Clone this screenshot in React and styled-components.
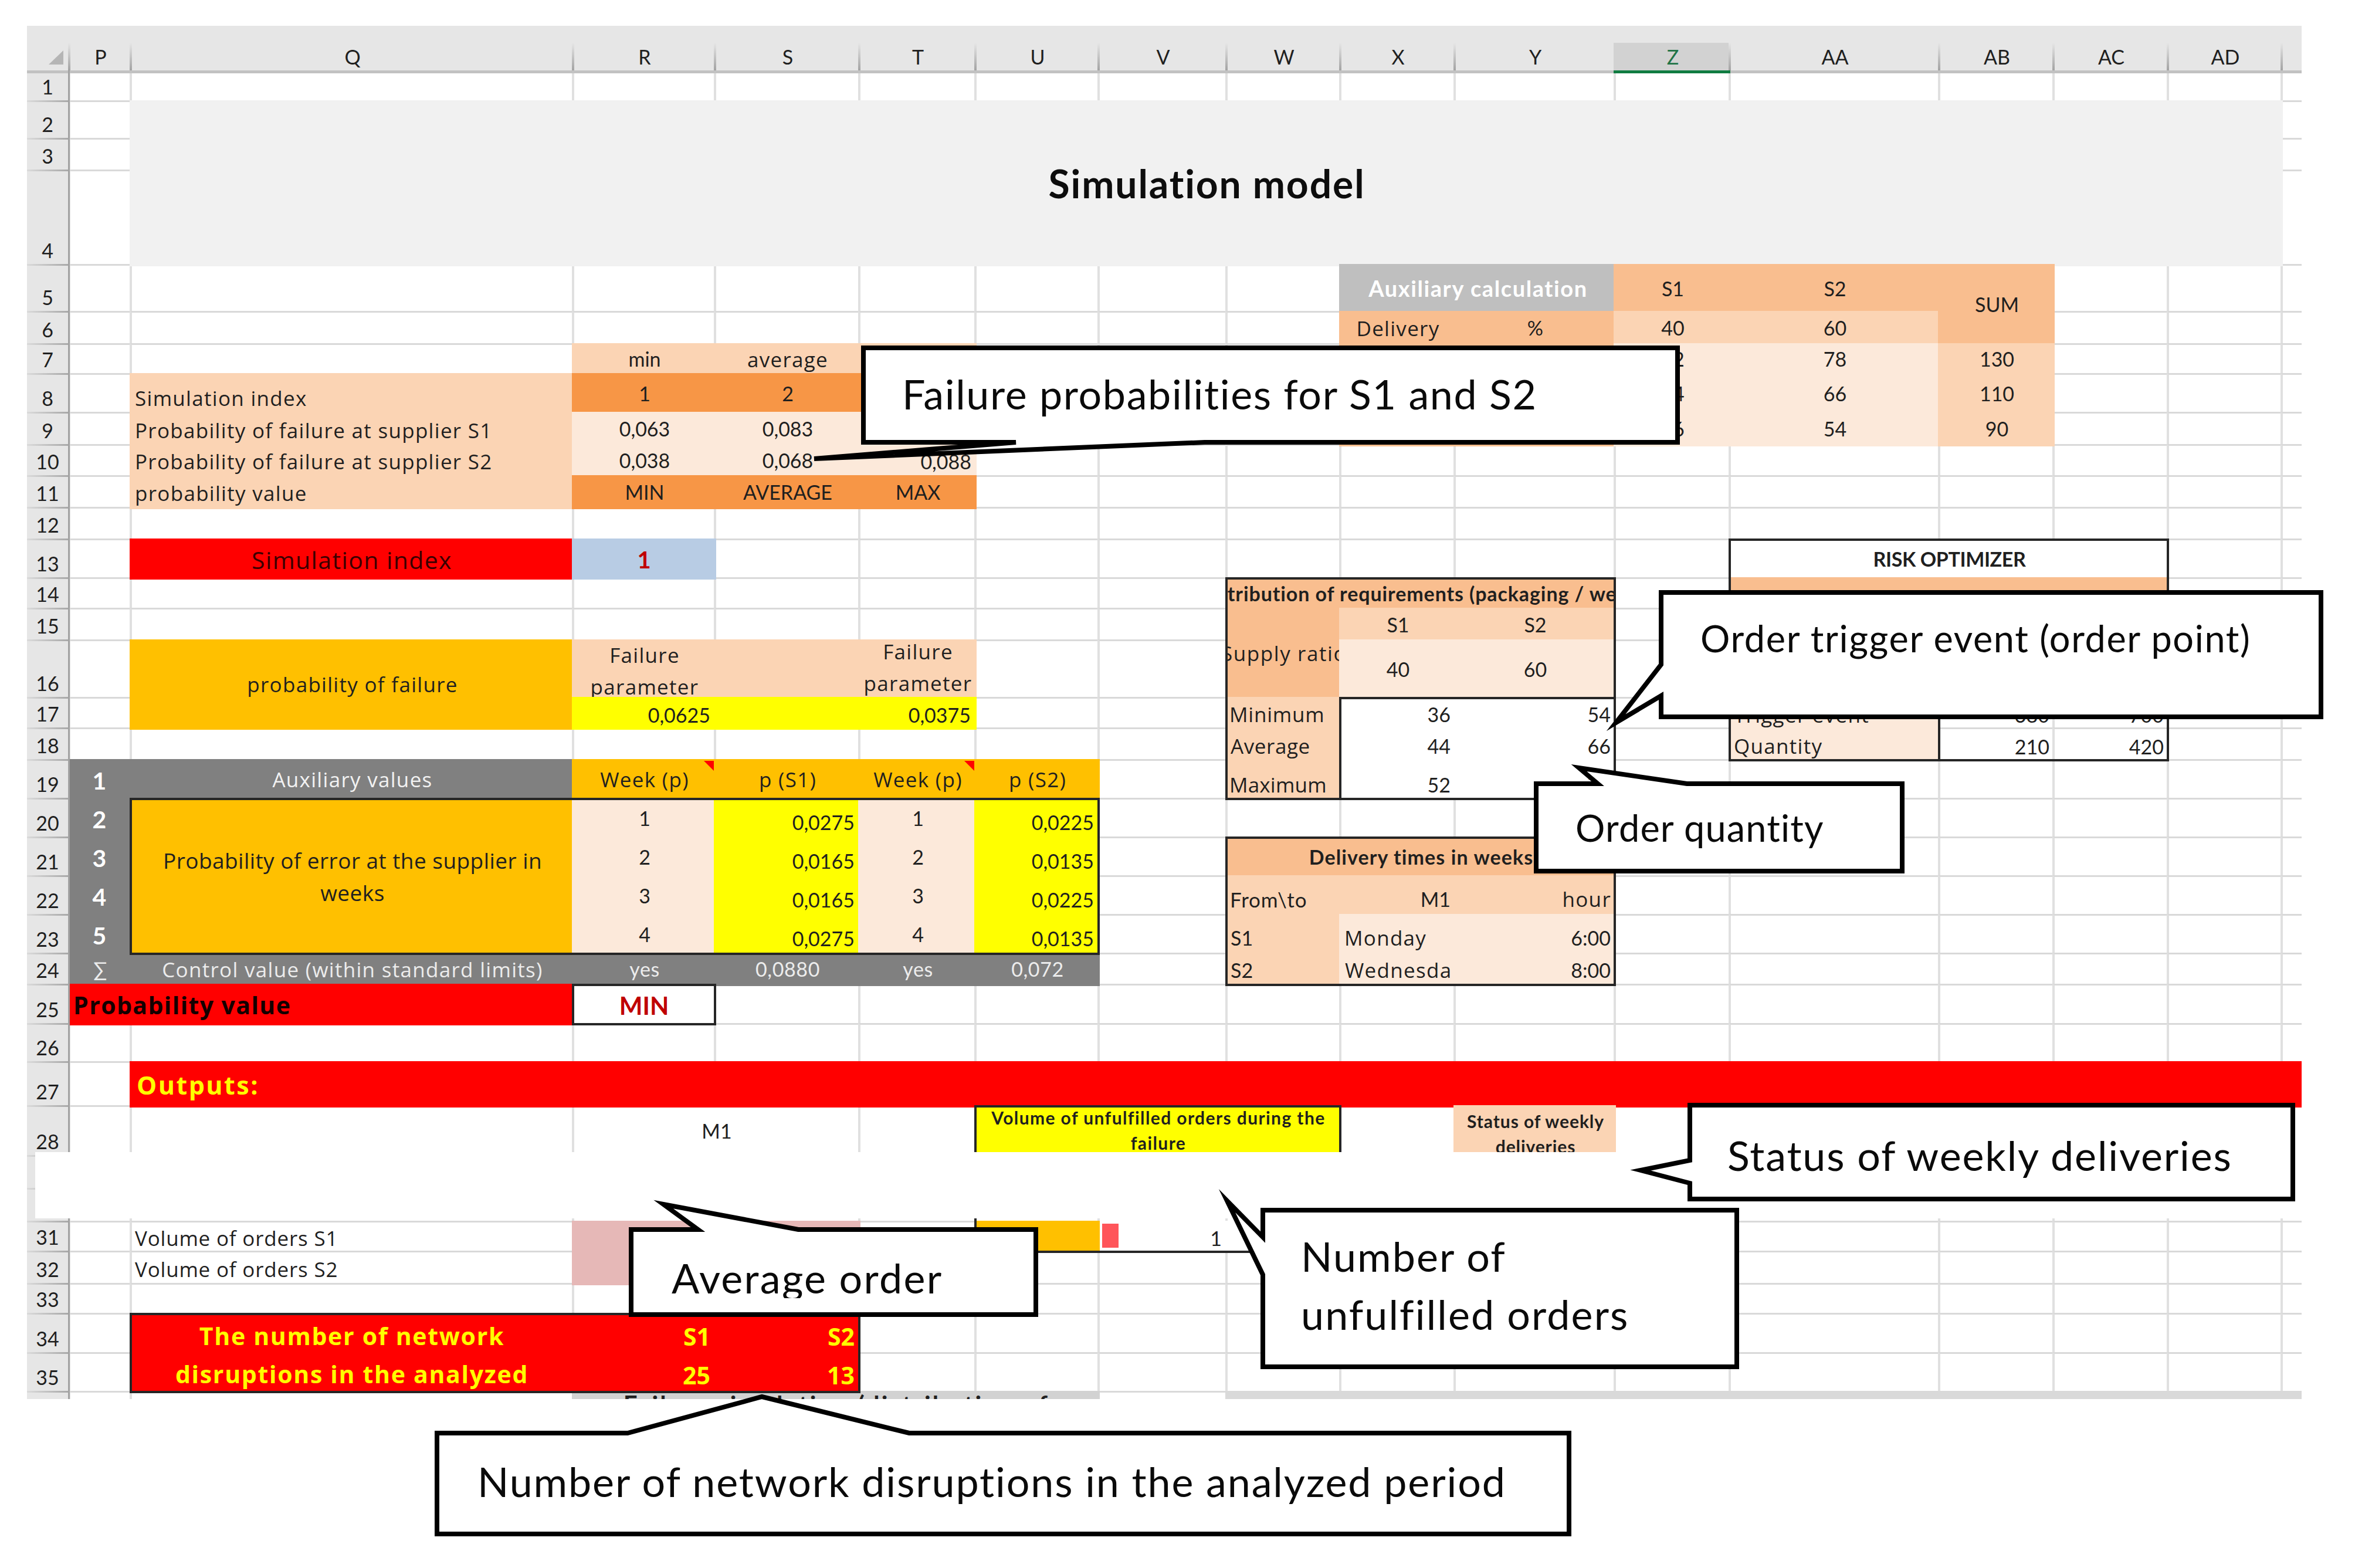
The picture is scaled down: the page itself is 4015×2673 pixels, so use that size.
import React from "react";
import styled, { createGlobalStyle, css } from "styled-components";

const GlobalStyle = createGlobalStyle`
  html, body { margin: 0; padding: 0; background: #fff; }
  * { box-sizing: border-box; }
`;

const color = {
  header: "#e6e6e6",
  line: "#d9d9d9",
  peach: "#fbd4b4",
  peachDark: "#f9be8f",
  peachLight: "#fce9da",
  orange: "#f79646",
  amber: "#ffc000",
  yellow: "#ffff00",
  red: "#ff0000",
  grey: "#808080",
  ink: "#1f1f1f",
  darkRed: "#c00000",
};

const font = {
  figures: `Lato, "Open Sans", sans-serif`,
  words: `"Open Sans", Lato, sans-serif`,
};

/* Widths of the columns and heights of the rows. */
const columns = [
  ["P", 105], ["Q", 754], ["R", 242], ["S", 246], ["T", 198], ["U", 210],
  ["V", 218], ["W", 194], ["X", 195], ["Y", 273], ["Z", 196], ["AA", 357],
  ["AB", 195], ["AC", 195], ["AD", 194], ["", 36],
];
const rows = [
  51, 64, 54, 161, 80, 55, 51, 66, 55, 53, 54, 54, 66, 52, 54, 98, 52, 54, 66,
  66, 66, 66, 66, 53, 67, 65, 75, 85, 56, 56, 51, 55, 51, 67, 66, 14,
];

const area = (range) => {
  const [from, to = from] = range.split(":");
  const parse = (ref) => {
    const [, c, r] = ref.match(/^([A-Z]+)(\d+)$/);
    const i = columns.findIndex(([name]) => name === c);
    return [Number(r) + 1, (i < 0 ? columns.length - 1 : i) + 2];
  };
  const [r1, c1] = parse(from);
  const [r2, c2] = parse(to);
  return `${r1} / ${c1} / ${r2 + 1} / ${c2 + 1}`;
};

const Page = styled.main`
  position: relative;
  width: 4015px;
  height: 2673px;
  padding: 44px 0 0 46px;
  overflow: hidden;
  background: #fff;
  color: ${color.ink};
  font-family: ${font.figures};
  font-variant-ligatures: none;
`;

const Sheet = styled.section`
  display: grid;
  width: 3878px;
  height: 2341px;
  overflow: hidden;
  grid-template-columns: 70px ${columns.map(([, w]) => `${w}px`).join(" ")};
  grid-template-rows: 76px ${rows.map((h) => `${h}px`).join(" ")};
  font-size: 34px;
  line-height: 1.2;
`;

const Corner = styled.div`
  grid-area: 1 / 1;
  display: flex;
  align-items: flex-end;
  justify-content: flex-end;
  padding: 0 8px 10px 0;
  background: ${color.header};

  &::after {
    content: "";
    border-style: solid;
    border-width: 0 0 24px 25px;
    border-color: transparent transparent #b5b5b5 transparent;
  }
`;

const ColumnHead = styled.div`
  grid-row: 1;
  display: flex;
  align-items: flex-end;
  justify-content: center;
  padding: 0 0 2px 6px;
  background: linear-gradient(${color.header} 38%, #a3a3a3) left / 4px 100% no-repeat ${color.header};
  ${(p) => p.$active && css`
    color: #217346;
    background: linear-gradient(${color.header} 29px, #d2d2d2 29px);
  `}
`;

const HeadRule = styled.div`
  grid-row: 2;
  grid-column: ${(p) => p.$col};
  align-self: start;
  height: 5px;
  margin-right: ${(p) => (p.$active ? "-3px" : 0)};
  z-index: ${(p) => (p.$active ? 2 : 1)};
  background: ${(p) => (p.$active ? "#107c41" : "#c2c2c2")};
`;

const RowHead = styled.div`
  grid-column: 1;
  display: flex;
  align-items: flex-end;
  justify-content: center;
  padding-bottom: 2px;
  background: linear-gradient(90deg, #dadada, #a8a8a8) top / 100% 3px no-repeat ${color.header};
`;

const RowRule = styled.div`
  grid-area: 2 / 2 / -1 / 3;
  justify-self: start;
  width: 3px;
  z-index: 1;
  background: #a3a3a3;
`;

const Blank = styled.div`
  border-left: 4px solid #e0e0e0;
  border-top: 3px solid ${color.line};
`;

const flexAlign = { start: "flex-start", center: "center", end: "flex-end" };

const Cell = styled.div`
  grid-area: ${(p) => area(p.$at)};
  display: flex;
  min-width: 0;
  min-height: 0;
  overflow: hidden;
  margin: ${(p) => (p.$plain ? "4px 0 0 4px" : "0 -4px -4px 0")};
  padding: ${(p) => p.$pad || "0 9px 6px 9px"};
  justify-content: ${(p) => flexAlign[p.$h || "start"]};
  align-items: ${(p) => flexAlign[p.$v || "end"]};
  text-align: ${(p) => p.$h || "left"};
  white-space: pre;
  background: ${(p) => p.$bg || "transparent"};
  color: ${(p) => p.$ink || "inherit"};
  font-family: ${(p) => p.$font || "inherit"};
  font-size: ${(p) => p.$size || 34}px;
  font-weight: ${(p) => (p.$bold ? 700 : 400)};
  line-height: ${(p) => p.$line || 1.2};
  letter-spacing: ${(p) => p.$track || 0}px;
`;

const Centred = styled(Cell).attrs((p) => ({
  $h: p.$h || "center",
  $v: p.$v || "center",
  $pad: p.$pad || "0 0 0 2px",
}))``;

const Outline = styled.div`
  grid-area: ${(p) => area(p.$at)};
  margin: 0 -4px -4px 0;
  border: 4px solid #262626;
  z-index: 1;
`;

const NoteMark = styled.i`
  grid-area: ${(p) => area(p.$at)};
  justify-self: end;
  margin-top: 3px;
  width: 17px;
  height: 17px;
  background: ${color.red};
  clip-path: polygon(0 0, 100% 0, 100% 100%);
`;

const DataBar = styled.div`
  grid-area: ${(p) => area(p.$at)};
  margin: 5px 0 5px 8px;
  width: 28px;
  background: #ff555a;
`;

const Redaction = styled.div`
  grid-area: 29 / 1 / 33 / -1;
  margin: 80px 0 55px 14px;
  background: #fff;
  z-index: 2;
`;

const CalloutBox = styled.aside`
  position: absolute;
  left: ${(p) => p.$x}px;
  top: ${(p) => p.$y}px;
  width: ${(p) => p.$w}px;
  height: ${(p) => p.$h}px;
  z-index: 3;
`;

const CalloutShape = styled.svg`
  position: absolute;
  inset: 0;
  width: 100%;
  height: 100%;
  overflow: visible;
  fill: #fff;
  stroke: #000;
  stroke-width: 8px;
  stroke-miterlimit: 10;
`;

const CalloutText = styled.p`
  position: relative;
  margin: 0;
  padding: ${(p) => p.$top}px 0 0 ${(p) => p.$left}px;
  height: ${(p) => (p.$clip ? `${p.$clip}px` : "auto")};
  overflow: ${(p) => (p.$clip ? "hidden" : "visible")};
  color: #0a0a0a;
  font-size: ${(p) => p.$size}px;
  line-height: ${(p) => p.$line || 1.2};
  letter-spacing: ${(p) => p.$track || 0}px;
  white-space: pre;
`;

function Callout({ x, y, w, h, outline, children, ...text }) {
  return (
    <CalloutBox $x={x} $y={y} $w={w} $h={h}>
      <CalloutShape>
        <polygon points={outline} />
      </CalloutShape>
      <CalloutText
        $top={text.top}
        $left={text.left}
        $size={text.size}
        $line={text.line}
        $track={text.track}
        $clip={text.clip}
      >
        {children}
      </CalloutText>
    </CalloutBox>
  );
}

/* Words are set a little larger and wider than figures. */
const words = { $font: font.words, $size: 35, $track: 1.3 };

const centredCells = (list, props) =>
  list.map(([at, value]) => (
    <Centred key={at} $at={at} {...props}>{value}</Centred>
  ));

const rightCells = (list, props) =>
  list.map(([at, value]) => (
    <Cell key={at} $at={at} $h="end" {...props}>{value}</Cell>
  ));

function Frame() {
  return (
    <>
      <Corner />
      {columns.map(([name], i) => (
        <ColumnHead key={i} $active={name === "Z"} style={{ gridColumn: i + 2 }}>{name}</ColumnHead>
      ))}
      {rows.map((_, i) => (
        <RowHead key={i} style={{ gridRow: i + 2 }}>{i < 35 ? i + 1 : ""}</RowHead>
      ))}
      {rows.map((_, r) =>
        columns.map((__, c) => (
          <Blank key={`${r}-${c}`} style={{ gridArea: `${r + 2} / ${c + 2}` }} />
        ))
      )}
      <HeadRule $col="1 / -1" />
      <HeadRule $col="12" $active />
      <RowRule />
    </>
  );
}

function FailureTable() {
  return (
    <>
      <Cell $at="R7:T7" $bg={color.peach} />
      <Cell $at="Q8:Q11" $bg={color.peach} />
      <Cell $at="R8:T8" $bg={color.orange} />
      <Cell $at="R9:T10" $bg={color.peachLight} />
      <Cell $at="R11:T11" $bg={color.orange} />
      <Cell $at="Q8" {...words}>Simulation index</Cell>
      <Cell $at="Q9" {...words}>Probability of failure at supplier S1</Cell>
      <Cell $at="Q10" {...words}>Probability of failure at supplier S2</Cell>
      <Cell $at="Q11" {...words}>probability value</Cell>
      {centredCells([
        ["R7", "min"], ["R8", "1"], ["S8", "2"],
        ["R9", "0,063"], ["S9", "0,083"], ["R10", "0,038"], ["S10", "0,068"],
        ["R11", "MIN"], ["S11", "AVERAGE"], ["T11", "MAX"],
      ])}
      <Centred $at="S7" {...words}>average</Centred>
      {rightCells([["T10", "0,088"]])}
      <Centred $at="Q13" $bg={color.red} {...words} $size={41} $track={1.4} $pad="4px 0 0" $ink="#3a0000">
        Simulation index
      </Centred>
      <Centred $at="R13" $bg="#b8cce4" $size={40} $bold $pad="2px 0 0" $ink={color.darkRed}>1</Centred>
    </>
  );
}

function WeeklyProbability() {
  const yellow = { $bg: color.yellow };
  return (
    <>
      <Centred $at="Q16:Q17" $bg={color.amber} {...words}>probability of failure</Centred>
      <Cell $at="R16:T16" $bg={color.peach} />
      <Centred $at="R16" $v="start" $line="54px" {...words}>{"Failure\nparameter"}</Centred>
      <Centred $at="T16" $v="end" $line="54px" {...words}>{"Failure\nparameter"}</Centred>
      <Cell $at="R17:T17" $bg={color.yellow} />
      {rightCells([["R17", "0,0625"], ["T17", "0,0375"]], { $pad: "0 10px 4px 0" })}

      <Cell $at="P19:Q19" $bg={color.grey} />
      <Cell $at="P20:P24" $bg={color.grey} />
      {centredCells(
        [["P19", "1"], ["P20", "2"], ["P21", "3"], ["P22", "4"], ["P23", "5"]],
        { $size: 41, $bold: true, $ink: "#fff", $pad: "4px 2px 0 0" }
      )}
      <Centred $at="Q19" {...words} $ink="#f2f2f2">Auxiliary values</Centred>
      <Cell $at="R19:U19" $bg={color.amber} />
      {centredCells(
        [["R19", "Week (p)"], ["S19", "p (S1)"], ["T19", "Week (p)"], ["U19", "p (S2)"]],
        words
      )}
      <NoteMark $at="R19" />
      <NoteMark $at="T19" />
      <Centred $at="Q20:Q23" $bg={color.amber} {...words} $size={37} $track={0.45} $line="55px">
        {"Probability of error at the supplier in\nweeks"}
      </Centred>
      <Cell $at="R20:R23" $bg={color.peachLight} />
      <Cell $at="S20:S23" {...yellow} />
      <Cell $at="T20:T23" $bg={color.peachLight} />
      <Cell $at="U20:U23" {...yellow} />
      {centredCells([
        ["R20", "1"], ["R21", "2"], ["R22", "3"], ["R23", "4"],
        ["T20", "1"], ["T21", "2"], ["T22", "3"], ["T23", "4"],
      ])}
      {rightCells(
        [
          ["S20", "0,0275"], ["S21", "0,0165"], ["S22", "0,0165"], ["S23", "0,0275"],
          ["U20", "0,0225"], ["U21", "0,0135"], ["U22", "0,0225"], ["U23", "0,0135"],
        ],
        { $pad: "0 10px 7px 0" }
      )}
      <Cell $at="Q24:U24" $bg={color.grey} />
      {centredCells(
        [["P24", "∑"], ["R24", "yes"], ["S24", "0,0880"], ["T24", "yes"], ["U24", "0,072"]],
        { $ink: "#ececec", $track: 0.6 }
      )}
      <Centred $at="Q24" {...words} $ink="#ececec">Control value (within standard limits)</Centred>
      <Outline $at="Q20:U23" />
      <Cell
        $at="P25:Q25" $bg={color.red} $bold {...words} $size={41} $track={1.4}
        $v="center" $pad="3px 0 0 9px" $ink="#140000"
      >
        Probability value
      </Cell>
      <Centred $at="R25" $bg="#fff" $bold $size={42} $pad="4px 0 0" $ink={color.darkRed}>MIN</Centred>
      <Outline $at="R25" />
    </>
  );
}

function AuxiliaryCalculation() {
  return (
    <>
      <Centred $at="X5:Y5" $bg="#bfbfbf" $bold $size={38} $track={1.6} $ink="#fff">Auxiliary calculation</Centred>
      <Cell $at="Z5:AA5" $bg={color.peachDark} />
      <Cell $at="X6:Y9" $bg={color.peachDark} />
      <Cell $at="Z6:AA6" $bg={color.peach} />
      <Cell $at="Z7:AA9" $bg={color.peachLight} />
      <Centred $at="AB5:AB6" $bg={color.peachDark}>SUM</Centred>
      <Cell $at="AB7:AB9" $bg={color.peach} />
      <Centred $at="X6" {...words}>Delivery</Centred>
      {centredCells([
        ["Z5", "S1"], ["AA5", "S2"], ["Y6", "%"], ["Z6", "40"], ["AA6", "60"],
        ["Z7", "52"], ["AA7", "78"], ["AB7", "130"],
        ["Z8", "44"], ["AA8", "66"], ["AB8", "110"],
        ["Z9", "36"], ["AA9", "54"], ["AB9", "90"],
      ])}
    </>
  );
}

function Requirements() {
  return (
    <>
      <Centred $at="W14:Y14" $bg={color.peachDark} $bold $track={0.9}>
        Distribution of requirements (packaging / week)
      </Centred>
      <Centred $at="W15:W16" $bg={color.peachDark} {...words} $track={1.6}>Supply ratio</Centred>
      <Cell $at="X15:Y15" $bg={color.peach} />
      <Cell $at="X16:Y16" $bg={color.peachLight} />
      {centredCells([["X15", "S1"], ["Y15", "S2"], ["X16", "40"], ["Y16", "60"]])}
      <Cell $at="W17:W19" $bg={color.peach} />
      <Cell $at="W17" {...words} $track={0.8} $pad="0 0 5px 7px">Minimum</Cell>
      <Cell $at="W18" {...words} $track={0.6} $pad="0 0 5px 9px">Average</Cell>
      <Cell $at="W19" {...words} $track={0.2} $pad="0 0 5px 7px">Maximum</Cell>
      <Cell $at="X17:Y19" $bg="#fff" />
      {rightCells(
        [["X17", "36"], ["Y17", "54"], ["X18", "44"], ["Y18", "66"], ["X19", "52"], ["Y19", "78"]],
        { $pad: "0 9px 5px 0" }
      )}
      <Outline $at="X17:Y19" />
      <Outline $at="W14:Y19" />

      <Centred $at="W21:Y21" $bg={color.peachDark} $bold $track={1.1}>Delivery times in weeks</Centred>
      <Cell $at="W22:Y22" $bg={color.peach} />
      <Cell $at="W23:W24" $bg={color.peach} />
      <Cell $at="X23:Y24" $bg={color.peachLight} />
      <Cell $at="W22" $size={35} $track={0.9} $pad="0 0 8px 8px">From\to</Cell>
      <Cell $at="W23" $pad="0 0 8px 9px">S1</Cell>
      <Cell $at="W24">S2</Cell>
      <Cell $at="X23" {...words} $pad="0 0 8px 9px">Monday</Cell>
      <Cell $at="X24" {...words} $pad="0 0 6px 10px">Wednesda</Cell>
      {rightCells([["X22", "M1"], ["Y23", "6:00"]], { $pad: "0 9px 8px 0" })}
      {rightCells([["Y22", "hour"]], { $pad: "0 8px 8px 0", ...words })}
      {rightCells([["Y24", "8:00"]])}
      <Outline $at="W21:Y24" />
    </>
  );
}

function RiskOptimizer() {
  return (
    <>
      <Centred $at="AA13:AC13" $bg="#fff" $bold $track={-0.4}>RISK OPTIMIZER</Centred>
      <Cell $at="AA14:AC15" $bg={color.peachDark} />
      <Cell $at="AA16:AA18" $bg={color.peachLight} />
      <Cell $at="AA17" {...words} $pad="0 0 4px 9px">Trigger event</Cell>
      <Cell $at="AA18" {...words} $pad="0 0 5px 9px">Quantity</Cell>
      {rightCells([["AB17", "380"], ["AC17", "700"], ["AB18", "210"], ["AC18", "420"]], { $pad: "0 9px 4px 0" })}
      <Outline $at="AA16:AA18" />
      <Outline $at="AA13:AC18" />
    </>
  );
}

function Outputs() {
  const alarm = { $font: font.words, $bold: true, $size: 41, $ink: color.yellow };
  return (
    <>
      <Cell
        $at="Q27:AE27" $bg={color.red} {...alarm} $size={43} $track={2.5}
        $v="center" $pad="3px 0 0 12px"
      >
        Outputs:
      </Cell>
      <Centred $at="R28:S28" $bg="#fff" $plain>M1</Centred>
      <Centred $at="U28:W28" $bg={color.yellow} $bold $size={30} $track={1.4} $line="43px" $v="start">
        {"Volume of unfulfilled orders during the\nfailure"}
      </Centred>
      <Centred $at="Y28" $bg={color.peach} $bold $size={30} $track={0.9} $line="43px" $v="start" $pad="6px 0 0 3px">
        {"Status of weekly\ndeliveries"}
      </Centred>
      <Cell $at="Q31" {...words} $track={0.8} $pad="0 0 4px 9px">Volume of orders S1</Cell>
      <Cell $at="Q32" {...words} $track={0.8}>Volume of orders S2</Cell>
      <Cell $at="R31:S32" $bg="#e6b8b7" />
      <Cell $at="V31:W31" $bg="#fff" />
      <Cell $at="U31" $bg={color.amber} />
      <DataBar $at="V31" />
      {rightCells([["V31", "1"]], { $pad: "0 10px 4px 0" })}
      <Outline $at="U28:W31" />

      <Cell $at="Q34:S35" $bg={color.red} />
      <Centred $at="Q34:Q35" {...alarm} $track={1.7} $line="65px" $pad="6px 0 0">
        {"The number of network\ndisruptions in the analyzed"}
      </Centred>
      {rightCells([["R34", "S1"], ["S34", "S2"], ["R35", "25"], ["S35", "13"]], { ...alarm, $pad: "0 10px 6px 0" })}
      <Centred $at="R36:U36" $bg="#d2d2d2" $bold $size={42} $track={3.2} $line={1.1} $v="start">
        Failure simulation (distribution of
      </Centred>
      <Cell $at="W36:AE36" $bg="#d9d9d9" />
      <Outline $at="Q34:S35" />
    </>
  );
}

function Callouts() {
  return (
    <>
      <Callout x={1472} y={593} w={1388} h={161} size={70} left={66} top={36} track={1.65}
        outline="0,0 1388,0 1388,161 582,161 -84,189 260,161 0,161">
        Failure probabilities for S1 and S2
      </Callout>
      <Callout x={2832} y={1010} w={1125} h={212} size={63} left={67} top={40} track={1.65}
        outline="0,0 1125,0 1125,212 0,212 0,176 -77,222 0,123">
        Order trigger event (order point)
      </Callout>
      <Callout x={2619} y={1336} w={624} h={149} size={63} left={67} top={37} track={1.2}
        outline="0,0 105,0 73,-27 257,0 624,0 624,149 0,149">
        Order quantity
      </Callout>
      <Callout x={2881} y={1884} w={1028} h={160} size={70} left={64} top={43} track={1.85}
        outline="0,0 1028,0 1028,160 0,160 0,133 -84,111 0,94">
        Status of weekly deliveries
      </Callout>
      <Callout x={2153} y={2063} w={808} h={267} size={70} left={65} top={29} line="99px" track={2.1}
        outline="0,0 808,0 808,267 0,267 0,110 -61,-16 0,46">
        {"Number of\nunfulfilled orders"}
      </Callout>
      <Callout x={1076} y={2096} w={690} h={145} size={70} left={69} top={40} clip={117} track={2.3}
        outline="0,0 114,0 55,-43 285,0 690,0 690,145 0,145">
        Average order
      </Callout>
      <Callout x={745} y={2443} w={1930} h={172} size={70} left={69} top={40} track={1.87}
        outline="0,0 325,0 554,-62 805,0 1930,0 1930,172 0,172">
        Number of network disruptions in the analyzed period
      </Callout>
    </>
  );
}

export default function App() {
  return (
    <>
      <GlobalStyle />
      <Page>
        <Sheet>
          <Frame />
          <Centred $at="Q2:AD4" $bg="#f1f1f1" $bold $size={66} $track={1.9} $ink="#0d0d0d">Simulation model</Centred>
          <AuxiliaryCalculation />
          <FailureTable />
          <Requirements />
          <RiskOptimizer />
          <WeeklyProbability />
          <Outputs />
          <Redaction />
        </Sheet>
        <Callouts />
      </Page>
    </>
  );
}
